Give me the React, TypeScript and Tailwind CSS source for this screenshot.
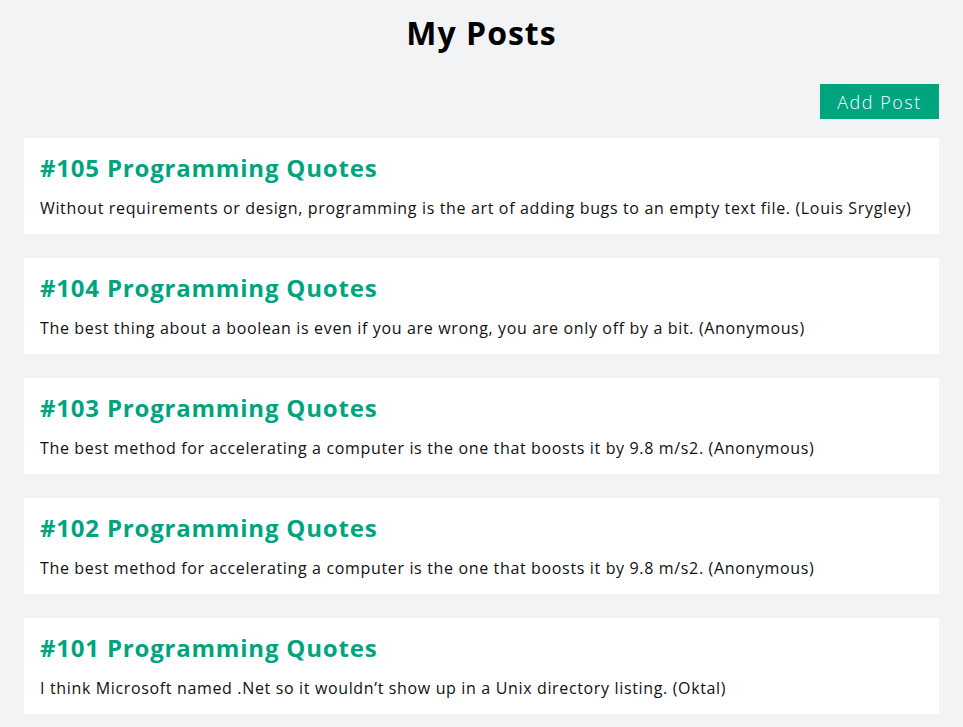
const posts = [
  { id: 105, body: "Without requirements or design, programming is the art of adding bugs to an empty text file. (Louis Srygley)" },
  { id: 104, body: "The best thing about a boolean is even if you are wrong, you are only off by a bit. (Anonymous)" },
  { id: 103, body: "The best method for accelerating a computer is the one that boosts it by 9.8 m/s2. (Anonymous)" },
  { id: 102, body: "The best method for accelerating a computer is the one that boosts it by 9.8 m/s2. (Anonymous)" },
  { id: 101, body: "I think Microsoft named .Net so it wouldn’t show up in a Unix directory listing. (Oktal)" },
];

export default function App() {
  return (
    <main className="min-h-screen bg-[#f2f3f5] px-6 font-['Open_Sans',sans-serif] text-black">
      <h1 className="pt-[13px] text-center text-[32px] font-bold leading-[40px] tracking-[1px]">My Posts</h1>
      <div className="mt-[31px] flex justify-end">
        <button className="h-[35px] w-[119px] bg-[#00a47f] pt-px text-[18px] font-light tracking-[1.5px] text-white">Add Post</button>
      </div>
      <div className="mt-[19px] flex flex-col gap-6">
        {posts.map((p) => (
          <div key={p.id} className="h-[96px] bg-white px-4 pt-[14px]">
            <h2 className="text-[24px] font-bold leading-[32px] tracking-[0.8px] text-[#00a47f]">#{p.id} Programming Quotes</h2>
            <p className="mt-[14px] text-[16px] leading-[20px] tracking-[0.65px] text-[#111]">{p.body}</p>
          </div>
        ))}
      </div>
    </main>
  );
}
